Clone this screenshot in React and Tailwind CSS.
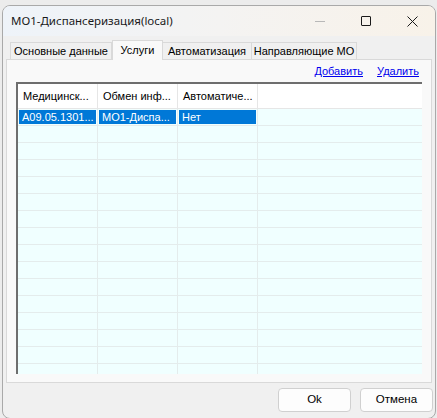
import React from 'react'

const rows = Array.from({ length: 16 })

const App = () => {
  return (
    <div className="w-[437px] h-[418px] bg-[#ececec] pl-[2px] pt-[5px] overflow-hidden" style={{ fontFamily: '"Liberation Sans", Arial, sans-serif' }}>
      <div className="w-[434px] h-[414px] bg-[#f0f0f0] border border-[#a9a9a9] rounded-t-[8px] rounded-b-[8px] overflow-hidden flex flex-col">
        {/* Title bar */}
        <div className="h-[30px] shrink-0 flex items-center bg-gradient-to-r from-[#eef3f9] via-[#f4f3f2] to-[#f8f2e9]">
          <div className="pl-[8px] text-[11.5px] text-[#1a1a1a] flex-1 whitespace-nowrap" style={{ fontFamily: '"Noto Sans", "Open Sans", sans-serif' }}>
            МО1-Диспансеризация(local)
          </div>
          <div className="w-[46px] h-[30px] flex items-center justify-center">
            <div className="w-[10px] h-px bg-[#b8b8b8]" />
          </div>
          <div className="w-[46px] h-[30px] flex items-center justify-center">
            <div className="w-[10px] h-[10px] border border-[#1a1a1a] rounded-[1px]" />
          </div>
          <div className="w-[46px] h-[30px] flex items-center justify-center">
            <svg width="11" height="11" viewBox="0 0 11 11">
              <path d="M0.5 0.5L10.5 10.5M10.5 0.5L0.5 10.5" stroke="#1a1a1a" strokeWidth="1" />
            </svg>
          </div>
        </div>

        {/* Tabs */}
        <div className="flex items-end pl-[6px] pt-[4px] h-[23px] shrink-0 text-[11px] text-[#000] whitespace-nowrap">
          <div className="h-[17px] w-[102px] flex items-center justify-center border border-b-0 border-[#d9d9d9] bg-[#f0f0f0] ml-[1px]">Основные данные</div>
          <div className="h-[20px] w-[51px] flex items-center justify-center border border-b-0 border-[#d9d9d9] bg-[#f9f9f9] -mb-px relative z-10">Услуги</div>
          <div className="h-[17px] w-[89px] flex items-center justify-center border border-b-0 border-l-0 border-[#d9d9d9] bg-[#f0f0f0]">Автоматизация</div>
          <div className="h-[17px] w-[105px] flex items-center justify-center border border-b-0 border-l-0 border-[#d9d9d9] bg-[#f0f0f0]">Направляющие МО</div>
        </div>

        {/* Panel */}
        <div className="mx-[3px] h-[324px] shrink-0 border border-[#d9d9d9] bg-[#f9f9f9] flex flex-col px-[9px]">
          <div className="h-[22px] flex items-center justify-end gap-[14px] pr-[3px] text-[11px] text-[#0000ee]">
            <span className="underline">Добавить</span>
            <span className="underline">Удалить</span>
          </div>
          <div className="h-[292px] border-t-2 border-l-2 border-[#6e6e6e] bg-[#f0ffff] overflow-hidden text-[11px] whitespace-nowrap">
            <div className="flex h-[25px] bg-white border-b border-[#e6e6e6]">
              <div className="w-[80px] px-[5px] flex items-center overflow-hidden border-r border-[#e6e6e6]">Медицинск...</div>
              <div className="w-[80px] px-[5px] flex items-center overflow-hidden border-r border-[#e6e6e6]">Обмен инф...</div>
              <div className="w-[80px] px-[5px] flex items-center overflow-hidden border-r border-[#e6e6e6]">Автоматиче...</div>
              <div className="flex-1" />
            </div>
            {rows.map((_, i) => (
              <div key={i} className="flex h-[17px] border-b border-[#e4ecec]">
                {i === 0 ? (
                  <>
                    <div className="w-[80px] border-r border-[#e4ecec] p-px"><div className="h-full bg-[#0078d7] text-white px-[3px] flex items-center overflow-hidden">A09.05.1301...</div></div>
                    <div className="w-[80px] border-r border-[#e4ecec] p-px"><div className="h-full bg-[#0078d7] text-white px-[3px] flex items-center overflow-hidden">МО1-Диспа...</div></div>
                    <div className="w-[80px] border-r border-[#e4ecec] p-px"><div className="h-full bg-[#0078d7] text-white px-[3px] flex items-center overflow-hidden">Нет</div></div>
                  </>
                ) : (
                  <>
                    <div className="w-[80px] border-r border-[#e4ecec]" />
                    <div className="w-[80px] border-r border-[#e4ecec]" />
                    <div className="w-[80px] border-r border-[#e4ecec]" />
                  </>
                )}
                <div className="flex-1" />
              </div>
            ))}
          </div>
        </div>

        {/* Buttons */}
        <div className="flex justify-end gap-[9px] pr-[2px] pt-[5px] text-[11.5px]">
          <div className="w-[73px] h-[24px] rounded-[4px] border border-[#d0d0d0] bg-[#fdfdfd] flex items-center justify-center">Ok</div>
          <div className="w-[73px] h-[24px] rounded-[4px] border border-[#d0d0d0] bg-[#fdfdfd] flex items-center justify-center">Отмена</div>
        </div>
      </div>
    </div>
  )
}

export default App
